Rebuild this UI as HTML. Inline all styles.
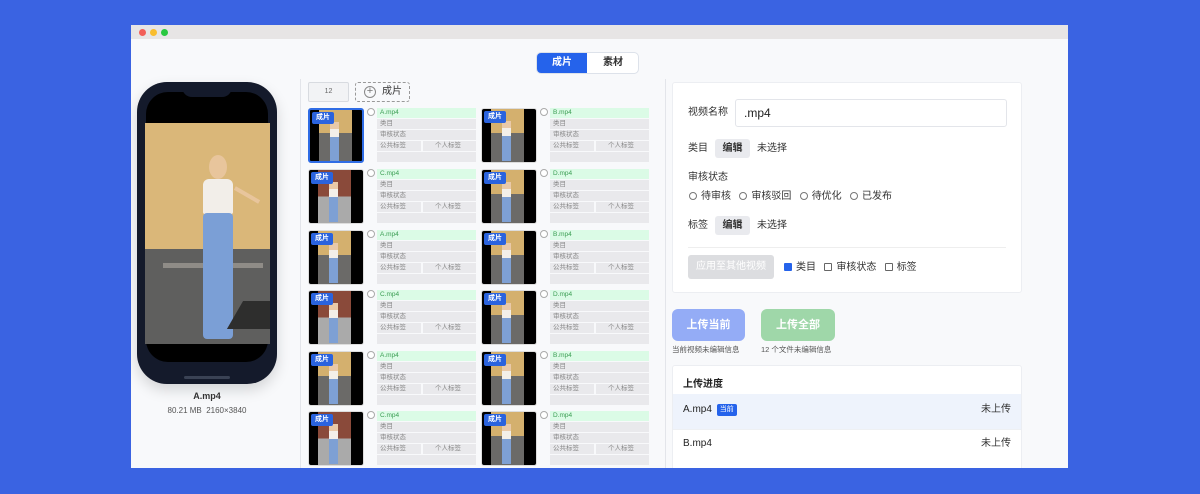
<!DOCTYPE html>
<html><head><meta charset="utf-8"><style>
*{box-sizing:border-box;margin:0;padding:0}
body{width:1200px;height:494px;background:#3a63e2;font-family:"Liberation Sans","Noto Sans CJK SC",sans-serif;position:relative;overflow:hidden}
.win{position:absolute;left:131px;top:25px;width:937px;height:443px;background:#f8f9fb;overflow:hidden}
.tb{position:absolute;left:0;top:0;width:100%;height:14px;background:#e7e5e5}
.dot{position:absolute;top:4px;width:7px;height:7px;border-radius:50%}
.a{position:absolute}
.seg{left:405px;top:27px;width:103px;height:22px;border:1px solid #dde2ea;border-radius:5px;background:#fff;font-size:10px;font-weight:bold;overflow:hidden}
.seg div{position:absolute;top:0;height:20px;line-height:20px;text-align:center;width:50px}
.phone{left:6px;top:57px;width:140px;height:302px;background:#141a2b;border-radius:30px;box-shadow:0 6px 14px rgba(0,0,0,.15)}
.c{position:absolute;width:170px;height:55px}
.th{position:absolute;left:0;top:0;width:56px;height:55px;background:#000;border-radius:3px;overflow:hidden;border:1px solid #ddd}
.th .v{position:absolute;left:9px;top:0;width:33px;height:100%;background:linear-gradient(#d4b06e 0 45%,#6b6a68 45%)}
.th .p{position:absolute;left:20px;top:12px;width:9px;height:40px;background:linear-gradient(#e9c9a8 0 18%,#f3efe9 18% 38%,#7ea0d4 38%)}
.bd{position:absolute;left:2px;top:2px;width:22px;height:12px;background:#2a63de;color:#fff;font-size:7px;font-weight:bold;text-align:center;line-height:12px;border-radius:2px}
.rd{position:absolute;left:59px;top:0;width:8px;height:8px;border:1px solid #aaa;border-radius:50%;background:#fff}
.inf{position:absolute;left:69px;top:0;width:99px}
.inf div{height:10px;margin-bottom:1px;background:#e9e9ec;font-size:6.5px;color:#888;line-height:10px;padding-left:3px}
.inf .n{background:#dbfbe6;color:#3a9d52}
.inf .t{display:flex;background:none;padding:0}
.inf .t span{flex:1;background:#e9e9ec;padding-left:3px}
.inf .t span+span{margin-left:2px;padding-left:12px}
.card{background:#fff;border:1px solid #eceef2;border-radius:3px}
.f{font-size:10px;color:#333;line-height:19px}
.btn{background:#e9eaee;border-radius:3px;font-size:10px;text-align:center;line-height:19px;width:35px;height:19px;font-weight:bold;color:#333}
.r{display:inline-block;width:8px;height:8px;border:1px solid #777;border-radius:50%;vertical-align:-1px;margin-right:4px}
.cb{display:inline-block;width:8px;height:8px;border:1px solid #666;border-radius:1px;vertical-align:-1px;margin-right:4px}
</style></head><body>
<div class="win">
<div class="tb"><div class="dot" style="left:8px;background:#f25f58"></div><div class="dot" style="left:19px;background:#f9bd2e"></div><div class="dot" style="left:30px;background:#29c840"></div></div>
<div class="a seg"><div style="left:0;background:#2563eb;color:#fff">成片</div><div style="left:51px;color:#333">素材</div></div>

<div class="a phone">
 <div class="a" style="left:9px;top:10px;width:122px;height:270px;background:#000;border-radius:22px"></div>
 <div class="a" style="left:45px;top:0;width:50px;height:15px;background:#141a2b;border-radius:0 0 10px 10px"></div>
 <div class="a" style="left:8px;top:41px;width:125px;height:221px;background:linear-gradient(#dab779 0 57%,#5f5f5e 57%);overflow:hidden">
  <div class="a" style="left:18px;top:140px;width:100px;height:5px;background:#8f8c87"></div>
  <div class="a" style="left:64px;top:32px;width:18px;height:24px;background:#e8c59c;border-radius:50%"></div>
  <div class="a" style="left:58px;top:56px;width:30px;height:35px;background:#f2eee9;border-radius:6px 6px 2px 2px"></div>
  <div class="a" style="left:58px;top:90px;width:30px;height:126px;background:#7b9fd6;border-radius:4px"></div>
  <div class="a" style="left:88px;top:70px;width:28px;height:4px;background:#e8c59c;transform:rotate(30deg)"></div>
  <div class="a" style="left:90px;top:178px;width:50px;height:28px;background:#2e2e2d;transform:skewX(-30deg)"></div>
 </div>
 <div class="a" style="left:47px;top:294px;width:46px;height:3px;background:#3a4254;border-radius:2px"></div>
</div>
<div class="a" style="left:6px;top:366px;width:140px;text-align:center;font-size:9px;font-weight:bold;color:#333">A.mp4</div>
<div class="a" style="left:6px;top:381px;width:140px;text-align:center;font-size:8px;color:#555">80.21 MB&nbsp; 2160×3840</div>

<div class="a" style="left:169px;top:54px;width:1px;height:389px;background:#e3e5ea"></div>
<div class="a" style="left:534px;top:54px;width:1px;height:389px;background:#e3e5ea"></div>

<div class="a" style="left:177px;top:57px;width:41px;height:20px;border:1px solid #d8dbe0;background:#f2f3f5;border-radius:2px;font-size:7px;color:#666;text-align:center;line-height:18px">12</div>
<div class="a" style="left:224px;top:57px;width:55px;height:20px;border:1px dashed #999;border-radius:3px;font-size:10px;color:#333;line-height:18px;padding-left:26px">成片</div>
<div class="a" style="left:233px;top:61px;width:12px;height:12px;border:1px solid #888;border-radius:50%;font-size:11px;line-height:9px;text-align:center;color:#777">+</div>

<div class="a" style="left:177px;top:83px;width:350px;height:360px">
<div class="c" style="left:0;top:0"><div class="th" style="border:2px solid #2f6ce5"><div class="v"></div><div class="p"></div><div class="bd">成片</div></div><div class="rd"></div><div class="inf"><div class="n">A.mp4</div><div>类目</div><div>审核状态</div><div class="t"><span>公共标签</span><span>个人标签</span></div><div></div></div></div>
<div class="c" style="left:173px;top:0"><div class="th"><div class="v"></div><div class="p"></div><div class="bd">成片</div></div><div class="rd"></div><div class="inf"><div class="n">B.mp4</div><div>类目</div><div>审核状态</div><div class="t"><span>公共标签</span><span>个人标签</span></div><div></div></div></div>
<div class="c" style="left:0;top:61px"><div class="th"><div class="v" style="background:linear-gradient(#8a4a3a 0 50%,#aaa 50%)"></div><div class="p"></div><div class="bd">成片</div></div><div class="rd"></div><div class="inf"><div class="n">C.mp4</div><div>类目</div><div>审核状态</div><div class="t"><span>公共标签</span><span>个人标签</span></div><div></div></div></div>
<div class="c" style="left:173px;top:61px"><div class="th"><div class="v"></div><div class="p"></div><div class="bd">成片</div></div><div class="rd"></div><div class="inf"><div class="n">D.mp4</div><div>类目</div><div>审核状态</div><div class="t"><span>公共标签</span><span>个人标签</span></div><div></div></div></div>
<div class="c" style="left:0;top:122px"><div class="th"><div class="v"></div><div class="p"></div><div class="bd">成片</div></div><div class="rd"></div><div class="inf"><div class="n">A.mp4</div><div>类目</div><div>审核状态</div><div class="t"><span>公共标签</span><span>个人标签</span></div><div></div></div></div>
<div class="c" style="left:173px;top:122px"><div class="th"><div class="v"></div><div class="p"></div><div class="bd">成片</div></div><div class="rd"></div><div class="inf"><div class="n">B.mp4</div><div>类目</div><div>审核状态</div><div class="t"><span>公共标签</span><span>个人标签</span></div><div></div></div></div>
<div class="c" style="left:0;top:182px"><div class="th"><div class="v" style="background:linear-gradient(#8a4a3a 0 50%,#aaa 50%)"></div><div class="p"></div><div class="bd">成片</div></div><div class="rd"></div><div class="inf"><div class="n">C.mp4</div><div>类目</div><div>审核状态</div><div class="t"><span>公共标签</span><span>个人标签</span></div><div></div></div></div>
<div class="c" style="left:173px;top:182px"><div class="th"><div class="v"></div><div class="p"></div><div class="bd">成片</div></div><div class="rd"></div><div class="inf"><div class="n">D.mp4</div><div>类目</div><div>审核状态</div><div class="t"><span>公共标签</span><span>个人标签</span></div><div></div></div></div>
<div class="c" style="left:0;top:243px"><div class="th"><div class="v"></div><div class="p"></div><div class="bd">成片</div></div><div class="rd"></div><div class="inf"><div class="n">A.mp4</div><div>类目</div><div>审核状态</div><div class="t"><span>公共标签</span><span>个人标签</span></div><div></div></div></div>
<div class="c" style="left:173px;top:243px"><div class="th"><div class="v"></div><div class="p"></div><div class="bd">成片</div></div><div class="rd"></div><div class="inf"><div class="n">B.mp4</div><div>类目</div><div>审核状态</div><div class="t"><span>公共标签</span><span>个人标签</span></div><div></div></div></div>
<div class="c" style="left:0;top:303px"><div class="th"><div class="v" style="background:linear-gradient(#8a4a3a 0 50%,#aaa 50%)"></div><div class="p"></div><div class="bd">成片</div></div><div class="rd"></div><div class="inf"><div class="n">C.mp4</div><div>类目</div><div>审核状态</div><div class="t"><span>公共标签</span><span>个人标签</span></div><div></div></div></div>
<div class="c" style="left:173px;top:303px"><div class="th"><div class="v"></div><div class="p"></div><div class="bd">成片</div></div><div class="rd"></div><div class="inf"><div class="n">D.mp4</div><div>类目</div><div>审核状态</div><div class="t"><span>公共标签</span><span>个人标签</span></div><div></div></div></div>
</div>

<div class="a card" style="left:541px;top:57px;width:350px;height:211px">
 <div class="a f" style="left:15px;top:20px">视频名称</div>
 <div class="a" style="left:62px;top:16px;width:272px;height:28px;border:1px solid #e3e5ea;border-radius:3px;font-size:12px;line-height:26px;padding-left:8px;color:#222">.mp4</div>
 <div class="a f" style="left:15px;top:56px">类目</div>
 <div class="a btn" style="left:42px;top:56px">编辑</div>
 <div class="a f" style="left:84px;top:56px">未选择</div>
 <div class="a f" style="left:15px;top:85px">审核状态</div>
 <div class="a f" style="left:16px;top:104px"><span class="r"></span>待审核&nbsp;&nbsp;&nbsp;<span class="r"></span>审核驳回&nbsp;&nbsp;&nbsp;<span class="r"></span>待优化&nbsp;&nbsp;&nbsp;<span class="r"></span>已发布</div>
 <div class="a f" style="left:15px;top:133px">标签</div>
 <div class="a btn" style="left:42px;top:133px">编辑</div>
 <div class="a f" style="left:84px;top:133px">未选择</div>
 <div class="a" style="left:15px;top:164px;width:318px;height:1px;background:#eee"></div>
 <div class="a" style="left:15px;top:172px;width:86px;height:24px;background:#dcdde0;border-radius:3px;color:#fff;font-size:10px;text-align:center;line-height:24px">应用至其他视频</div>
 <div class="a f" style="left:111px;top:175px"><span class="cb" style="background:#2563eb;border-color:#2563eb"></span>类目&nbsp;&nbsp;&nbsp;<span class="cb"></span>审核状态&nbsp;&nbsp;&nbsp;<span class="cb"></span>标签</div>
</div>

<div class="a" style="left:541px;top:284px;width:73px;height:32px;background:#94acf6;border-radius:6px;color:#fff;font-size:11px;font-weight:bold;text-align:center;line-height:32px">上传当前</div>
<div class="a" style="left:630px;top:284px;width:74px;height:32px;background:#9fd7a9;border-radius:6px;color:#fff;font-size:11px;font-weight:bold;text-align:center;line-height:32px">上传全部</div>
<div class="a" style="left:541px;top:319px;font-size:7.5px;color:#555">当前视频未编辑信息</div>
<div class="a" style="left:630px;top:319px;font-size:7.5px;color:#555">12 个文件未编辑信息</div>

<div class="a card" style="left:541px;top:340px;width:350px;height:110px;overflow:hidden">
 <div class="a" style="left:10px;top:9px;font-size:10px;font-weight:bold;color:#222">上传进度</div>
 <div class="a" style="left:0;top:28px;width:100%;height:35px;background:#eef3fc"></div>
 <div class="a f" style="left:10px;top:34px;color:#222">A.mp4 <span style="display:inline-block;background:#2563eb;color:#fff;font-size:7px;line-height:10px;padding:1px 3px;border-radius:2px;vertical-align:1px;margin-left:2px">当前</span></div>
 <div class="a f" style="right:10px;top:34px">未上传</div>
 <div class="a" style="left:0;top:63px;width:100%;height:1px;background:#eef0f3"></div>
 <div class="a f" style="left:10px;top:68px;color:#222">B.mp4</div>
 <div class="a f" style="right:10px;top:68px">未上传</div>
</div>
</div>
</body></html>
